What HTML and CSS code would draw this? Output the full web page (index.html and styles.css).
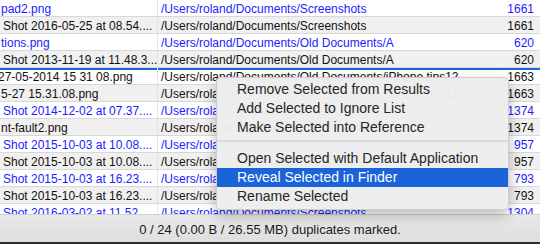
FILE: index.html
```html
<!DOCTYPE html>
<html>
<head>
<meta charset="utf-8">
<link rel="stylesheet" href="styles.css">
</head>
<body>
<div class="window">
  <div class="table">
    <div class="row odd blue"><div class="c name">pad2.png</div><div class="c path">/Users/roland/Documents/Screenshots</div><div class="c size">1661</div></div>
    <div class="row even"><div class="c name sp">Shot 2016-05-25 at 08.54....</div><div class="c path">/Users/roland/Documents/Screenshots</div><div class="c size">1661</div></div>
    <div class="row odd blue"><div class="c name">tions.png</div><div class="c path">/Users/roland/Documents/Old Documents/A</div><div class="c size">620</div></div>
    <div class="row even"><div class="c name sp">Shot 2013-11-19 at 11.48.3....</div><div class="c path">/Users/roland/Documents/Old Documents/A</div><div class="c size">620</div></div>
    <div class="row odd marked"><div class="c name neg">27-05-2014 15 31 08.png</div><div class="c path">/Users/roland/Documents/Old Documents/iPhone tips12</div><div class="c size">1663</div></div>
    <div class="row even"><div class="c name">5-27 15.31.08.png</div><div class="c path">/Users/roland/Documents/Old Documents/iPhone tips12</div><div class="c size">1663</div></div>
    <div class="row odd blue"><div class="c name sp">Shot 2014-12-02 at 07.37....</div><div class="c path">/Users/roland/Documents/Screenshots</div><div class="c size">1374</div></div>
    <div class="row even"><div class="c name">nt-fault2.png</div><div class="c path">/Users/roland/Documents/Old Documents</div><div class="c size">1374</div></div>
    <div class="row odd blue"><div class="c name sp">Shot 2015-10-03 at 10.08....</div><div class="c path">/Users/roland/Documents/Screenshots</div><div class="c size">957</div></div>
    <div class="row even"><div class="c name sp">Shot 2015-10-03 at 10.08....</div><div class="c path">/Users/roland/Documents/Old Documents</div><div class="c size">957</div></div>
    <div class="row odd blue"><div class="c name sp">Shot 2015-10-03 at 16.23....</div><div class="c path">/Users/roland/Documents/Screenshots</div><div class="c size">793</div></div>
    <div class="row even"><div class="c name sp">Shot 2015-10-03 at 16.23....</div><div class="c path">/Users/roland/Documents/Old Documents</div><div class="c size">793</div></div>
    <div class="row odd blue"><div class="c name sp">Shot 2016-03-02 at 11.52....</div><div class="c path">/Users/roland/Documents/Screenshots</div><div class="c size">1304</div></div>
  </div>
  <div class="status">0 / 24 (0.00 B / 26.55 MB) duplicates marked.</div>
  <div class="edge"></div>

  <div class="menu">
    <div class="item">Remove Selected from Results</div>
    <div class="item">Add Selected to Ignore List</div>
    <div class="item">Make Selected into Reference</div>
    <div class="sep"></div>
    <div class="item">Open Selected with Default Application</div>
    <div class="item active">Reveal Selected in Finder</div>
    <div class="item">Rename Selected</div>
  </div>
</div>
</body>
</html>
```

FILE: styles.css
```css
* { box-sizing: border-box; }
html, body {
  margin: 0;
  padding: 0;
  width: 540px;
  height: 244px;
  overflow: hidden;
  background: #ffffff;
}
.window {
  position: relative;
  width: 540px;
  height: 244px;
  display: flex;
  flex-direction: column;
  font-family: "Liberation Sans", Arial, sans-serif;
}
.table {
  height: 214px;
  overflow: hidden;
  flex: none;
}
.row {
  display: flex;
  height: 17px;
  border-bottom: 1px solid #d8d8d8;
  font-size: 12px;
  line-height: 18px;
  color: #111111;
}
.row.odd { background: #ffffff; }
.row.even { background: #f0f0f0; }
.row.blue { color: #1c1cff; }
.row.marked { box-shadow: inset 0 2px 0 #1d64d6; }
.c {
  white-space: nowrap;
  overflow: hidden;
}
.name {
  width: 158px;
  flex: none;
  padding-left: 1px;
  border-right: 1px solid #e4e4e4;
}
.name.sp { padding-left: 3px; }
.name.neg { text-indent: -2px; padding-left: 0; }
.path {
  flex: 1;
  padding-left: 3px;
}
.size {
  width: 70px;
  flex: none;
  text-align: right;
  padding-right: 6px;
}
.status {
  flex: 1;
  border-top: 1px solid #d0d0d0;
  background: linear-gradient(#e9e9e9, #dedede);
  font-size: 13px;
  color: #1a1a1a;
  display: flex;
  align-items: center;
  justify-content: center;
  padding-top: 1px;
}
.edge {
  height: 2px;
  flex: none;
  background: #2b2b2b;
}
.menu {
  position: absolute;
  left: 216px;
  top: 77px;
  width: 293px;
  height: 133px;
  padding: 2px 0 3px;
  background: rgba(238, 238, 238, 0.98);
  border: 1px solid rgba(0, 0, 0, 0.14);
  border-radius: 5px;
  box-shadow: 0 5px 14px rgba(0, 0, 0, 0.28);
  font-size: 14px;
  color: #262626;
}
.item {
  height: 19px;
  line-height: 19px;
  padding-left: 20px;
  white-space: nowrap;
}
.item.active {
  background: #1b63d8;
  color: #ffffff;
}
.sep {
  height: 12px;
  padding-top: 3px;
}
.sep::before {
  content: "";
  display: block;
  height: 2px;
  background: #dadada;
}
```
